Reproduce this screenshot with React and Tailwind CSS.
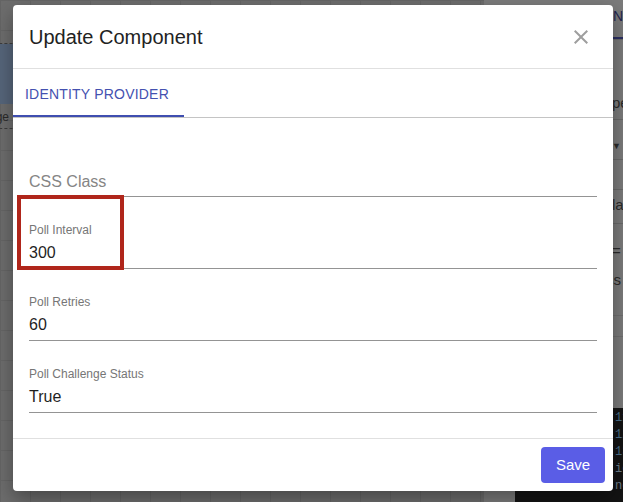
import React from 'react'

const fields = [
  { label: 'Poll Interval', value: '300', highlight: true },
  { label: 'Poll Retries', value: '60' },
  { label: 'Poll Challenge Status', value: 'True' },
]

function Field({ label, value, highlight }) {
  return (
    <div className="relative flex h-[72px] flex-col justify-end border-b border-[#949494]">
      {highlight ? (
        <div className="pointer-events-none absolute left-[-12px] top-[-2px] h-[75px] w-[107px] border-[4px] border-[#b0261b]" />
      ) : null}
      <div className="text-[12px] leading-[14px] text-[#767676]">{label}</div>
      <div className="mt-[4px] pb-[3px] text-[16px] leading-[24px] text-[#1f1f1f]">{value}</div>
    </div>
  )
}

export default function App() {
  return (
    <div className="relative flex h-[502px] w-[623px] overflow-hidden bg-[#6d6d6d] font-['Liberation_Sans',Arial,sans-serif]">
      {/* dimmed editor behind the dialog */}
      <div className="relative flex-1 bg-[linear-gradient(#656565_1px,transparent_1px),linear-gradient(90deg,#656565_1px,transparent_1px)] [background-size:30px_30px]">
        <div className="absolute left-[-42px] top-[43px] w-[70px] border-y border-dashed border-[#3d3d3d]">
          <div className="h-[60px] bg-[#56657a]" />
          <div className="h-[24px] pl-[9px] pt-[4px] text-[12px] text-[#2a2a2a]">Storage</div>
        </div>
      </div>
      <div className="flex w-[139px] flex-col bg-[#7b7b7b] text-[13px] text-[#2b2b2b]">
        <div className="flex h-[40px] items-end border-b border-[#6a6a6a]">
          <div className="ml-[129px] border-b-2 border-[#2b2f63] pb-[10px] text-[14px] text-[#23264f]">NODE</div>
        </div>
        <div className="mt-[50px] h-[30px] border-b border-[#6a6a6a] pl-[128px] pt-[2px] text-[15px]">pe</div>
        <div className="flex h-[40px] items-end justify-end border-b border-[#6a6a6a] pb-[6px] pr-[2px] text-[9px]">▼</div>
        <div className="h-[30px] border-b border-[#6a6a6a]" />
        <div className="h-[34px] border-b border-[#6a6a6a] pl-[128px] pt-[4px] text-[15px]">la</div>
        <div className="pl-[128px] pt-[16px] text-[15px]">=</div>
        <div className="pl-[122px] pt-[6px] text-[15px]">ss</div>
        <div className="mt-[24px] h-[22px] border-y border-[#6f6f6f]" />
        <div className="flex-1" />
        <div className="h-[94px] pl-[31px]">
          <div className="h-full bg-[#141414] pl-[100px] pt-[2px] font-['Liberation_Mono',monospace] text-[12px] leading-[17px] text-[#4b6f8a]">
            <div>11</div>
            <div>12</div>
            <div>13</div>
            <div className="text-[#6e7f8c]">ie</div>
            <div className="text-[#6e7f8c]">ne</div>
          </div>
        </div>
      </div>

      {/* dialog */}
      <div className="absolute left-[13px] top-[5px] flex h-[486px] w-[600px] flex-col rounded-[4px] bg-white shadow-[0_8px_20px_rgba(0,0,0,0.35)]">
        <div className="flex h-[64px] items-center justify-between border-b border-[#e0e0e0] pl-4 pr-[20px]">
          <h2 className="text-[20px] font-normal text-[#222]">Update Component</h2>
          <button className="flex h-[24px] w-[24px] items-center justify-center">
            <svg width="24" height="24" viewBox="0 0 24 24" fill="#9e9e9e">
              <path d="M19 6.41 17.59 5 12 10.59 6.41 5 5 6.41 10.59 12 5 17.59 6.41 19 12 13.41 17.59 19 19 17.59 13.41 12z" />
            </svg>
          </button>
        </div>
        <div className="flex h-[49px] border-b border-[#c4c4c4]">
          <div className="flex w-[171px] items-center justify-start border-b-2 border-[#3f4eb0] pl-3 pt-[4px] text-[14px] tracking-[0.2px] text-[#4451b0]">
            IDENTITY PROVIDER
          </div>
        </div>
        <div className="flex-1 px-4 pt-[7px]">
          <div className="flex h-[72px] flex-col justify-end border-b border-[#949494]">
            <div className="pb-[2px] text-[16px] leading-[24px] text-[#858585]">CSS Class</div>
          </div>
          {fields.map((f) => (
            <Field key={f.label} {...f} />
          ))}
        </div>
        <div className="flex justify-end border-t border-[#e0e0e0] p-2">
          <button className="h-9 w-16 rounded-[4px] bg-[#5a5de6] text-[15px] text-white">Save</button>
        </div>
      </div>
    </div>
  )
}
